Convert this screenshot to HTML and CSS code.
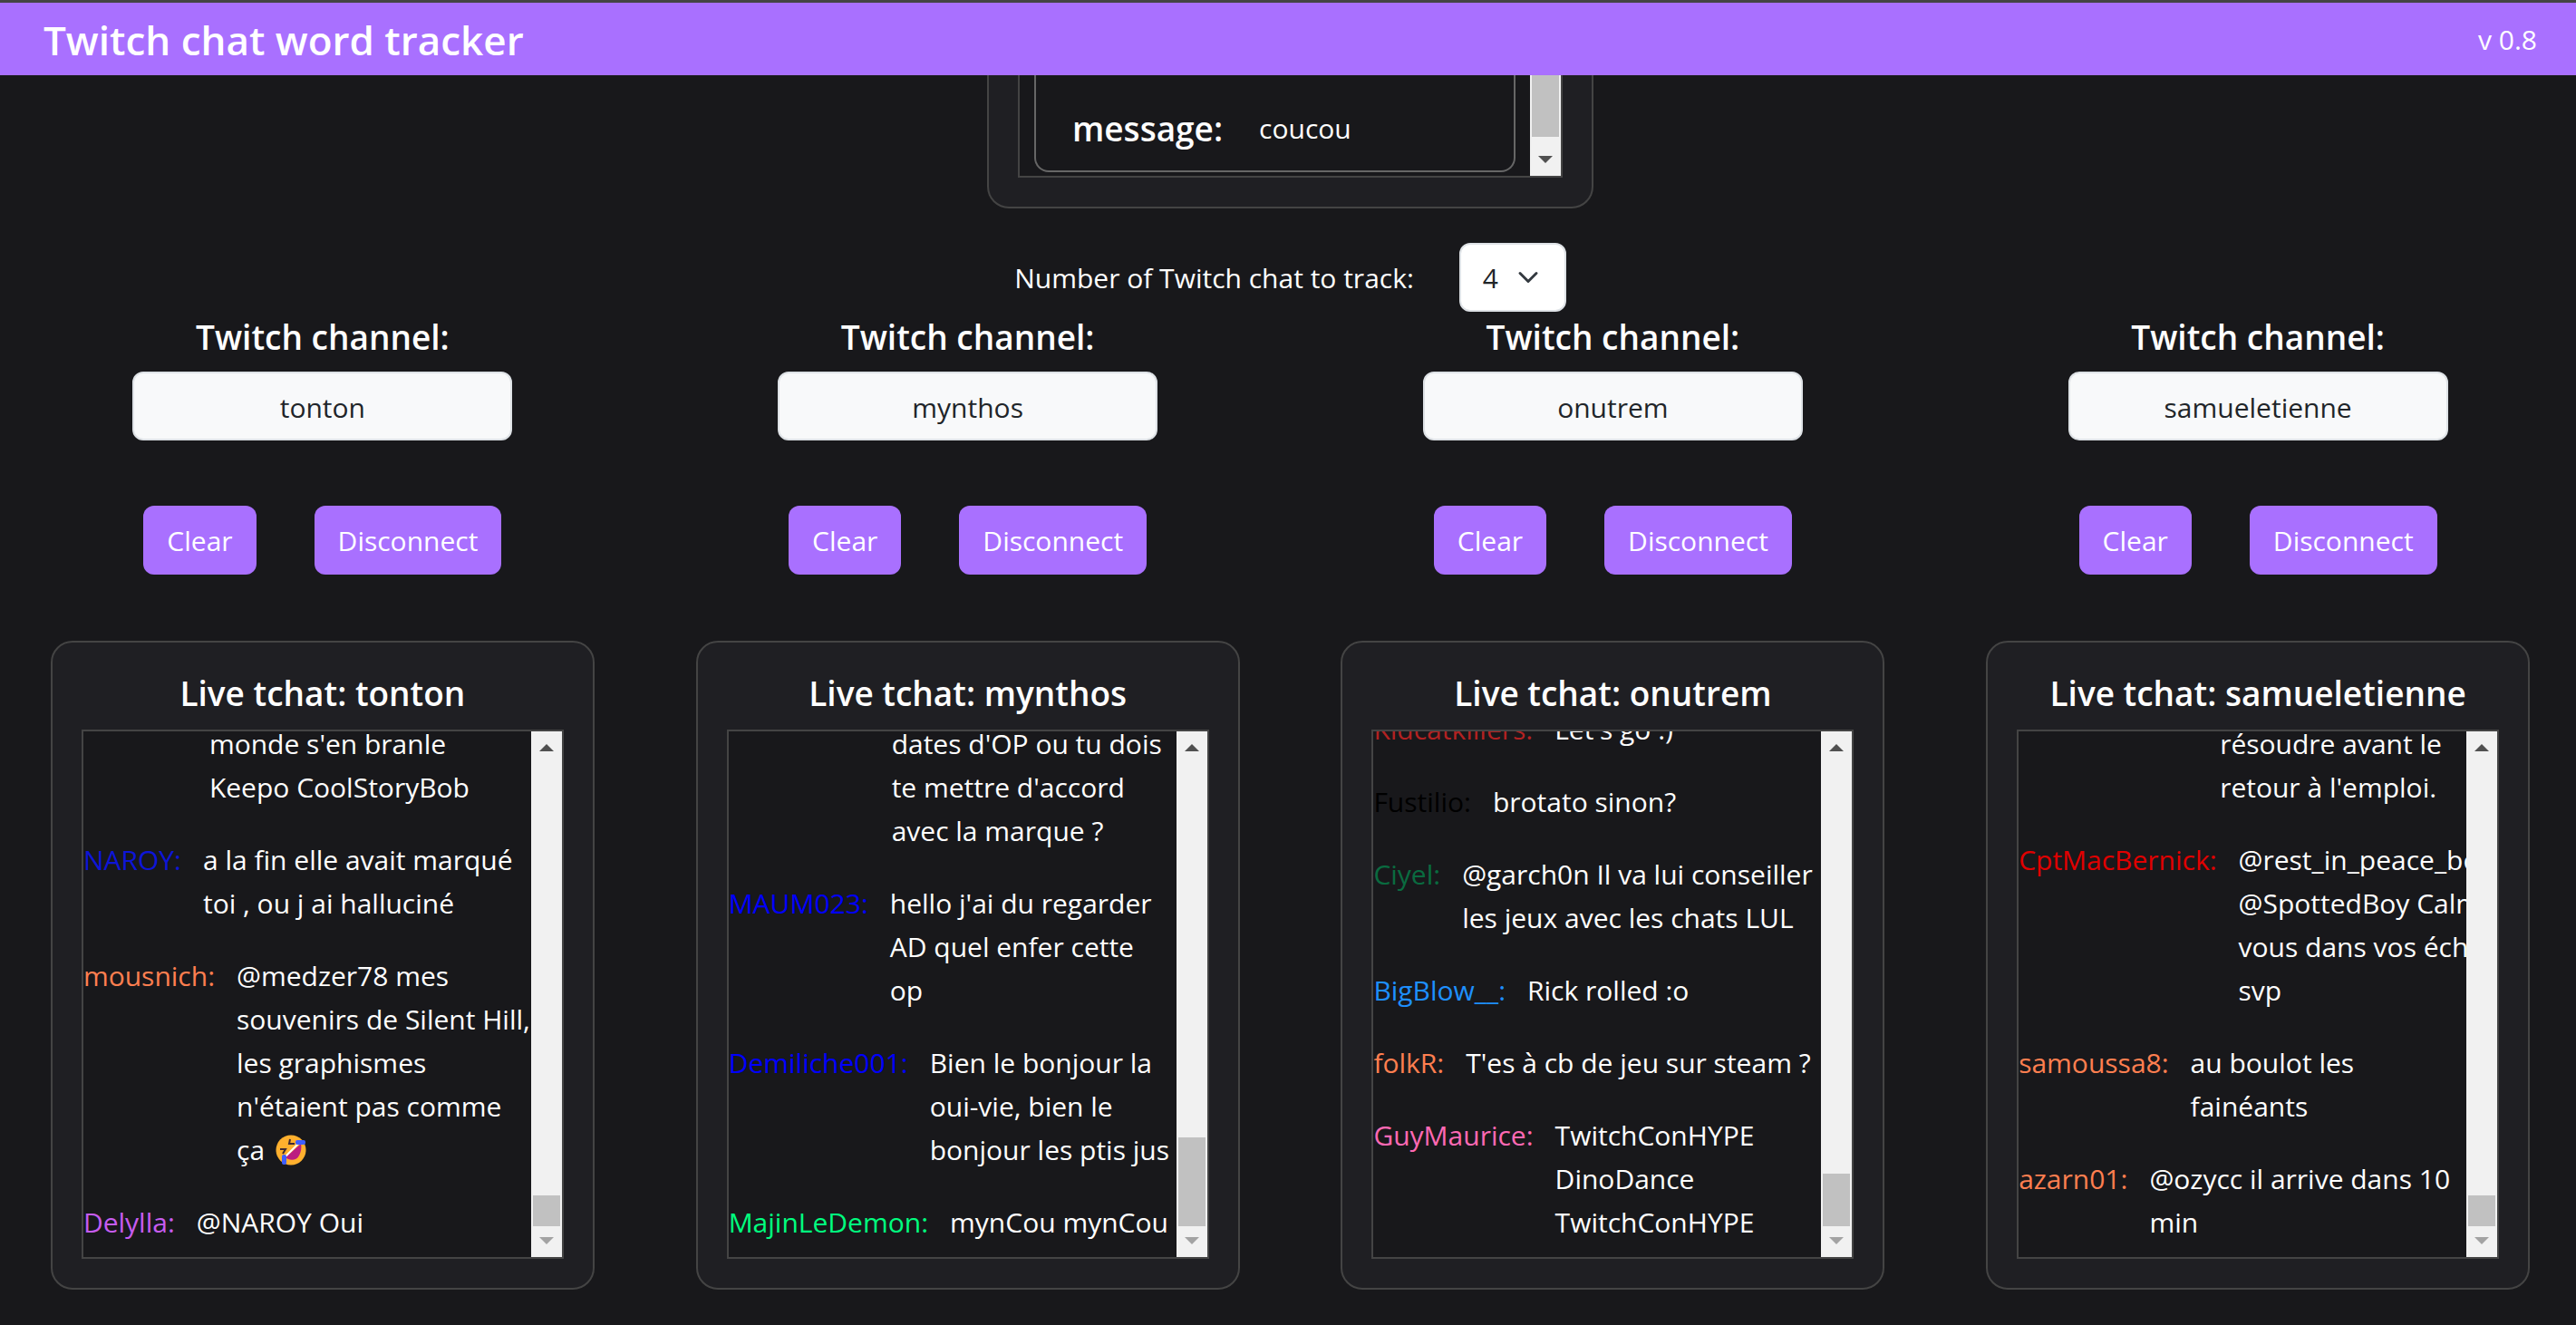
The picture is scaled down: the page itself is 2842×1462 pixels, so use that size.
FILE: index.html
```html
<!DOCTYPE html>
<html lang="en">
<head>
<meta charset="utf-8">
<title>Twitch chat word tracker</title>
<link rel="stylesheet" href="styles.css">
</head>
<body>
<header class="topbar">
  <h1 class="topbar-title">Twitch chat word tracker</h1>
  <span class="topbar-version">v 0.8</span>
</header>
<main class="page">
  <section class="card tracked">
    <div class="scrollbox tracked-box">
      <div class="tracked-list">
        <div class="tracked-item"><h2 class="heading">message:</h2><span>coucou</span></div>
      </div>
      <div class="scrollbar" aria-hidden="true">
        <div class="track"><div class="thumb" style="height: 68px"></div></div>
        <svg class="arrow" viewBox="0 0 34 34"><path d="M9 12h16l-8 8z"/></svg>
      </div>
    </div>
  </section>

  <div class="count">
    <label for="count">Number of Twitch chat to track:</label>
    <div class="select-wrap">
      <select id="count" class="select"><option>1</option><option>2</option><option>3</option><option selected>4</option></select>
      <svg class="chevron" viewBox="0 0 16 16"><path d="m2 5 6 6 6-6"/></svg>
    </div>
  </div>

  <div class="channels">
    <section class="channel">
      <label class="heading" for="ch1">Twitch channel:</label>
      <input class="field" id="ch1" type="text" value="tonton">
      <div class="actions"><button class="btn">Clear</button><button class="btn">Disconnect</button></div>
      <div class="card chat">
        <h2 class="heading">Live tchat: tonton</h2>
        <div class="scrollbox">
          <div class="messages">
            <p class="msg"><span class="indent-s"></span><span>monde s'en branle<br>Keepo CoolStoryBob</span></p>
            <p class="msg"><span class="navy">NAROY:</span><span>a la fin elle avait marqué<br>toi , ou j ai halluciné</span></p>
            <p class="msg"><span class="coral">mousnich:</span><span>@medzer78 mes<br>souvenirs de Silent Hill,<br>les graphismes<br>n'étaient pas comme<br>ça <svg class="emoji" viewBox="0 0 34 34" role="img" aria-label="rolling on the floor laughing"><circle cx="17" cy="17" r="16.500" fill="#ffb02e"/><path d="M28 10 11 25c4 4 12 4 15-2 2-4 3-8 2-13z" fill="#bb1d80"/><path d="M26 9 11 24" stroke="#fff" stroke-width="2"/><path d="m5 16 6 0-3 5M16 5l-1 5 6 0" fill="none" stroke="#402a32" stroke-width="2"/><rect x="22" y="6" width="11" height="5" rx="2" fill="#3f5fff"/><rect x="7" y="22" width="5" height="11" rx="2" fill="#3f5fff"/></svg></span></p>
            <p class="msg"><span class="orchid">Delylla:</span><span>@NAROY Oui</span></p>
          </div>
          <div class="scrollbar" aria-hidden="true">
            <svg class="arrow" viewBox="0 0 34 34"><path d="M9 22h16l-8-8z"/></svg>
            <div class="track track-end"><div class="thumb" style="height: 34px"></div></div>
            <svg class="arrow off" viewBox="0 0 34 34"><path d="M9 12h16l-8 8z"/></svg>
          </div>
        </div>
      </div>
    </section>

    <section class="channel">
      <label class="heading" for="ch2">Twitch channel:</label>
      <input class="field" id="ch2" type="text" value="mynthos">
      <div class="actions"><button class="btn">Clear</button><button class="btn">Disconnect</button></div>
      <div class="card chat">
        <h2 class="heading">Live tchat: mynthos</h2>
        <div class="scrollbox">
          <div class="messages">
            <p class="msg"><span class="indent-m"></span><span>dates d'OP ou tu dois<br>te mettre d'accord<br>avec la marque ?</span></p>
            <p class="msg"><span class="blue">MAUM023:</span><span>hello j'ai du regarder<br>AD quel enfer cette<br>op</span></p>
            <p class="msg"><span class="blue">Demiliche001:</span><span>Bien le bonjour la<br>oui-vie, bien le<br>bonjour les ptis jus</span></p>
            <p class="msg"><span class="green">MajinLeDemon:</span><span>mynCou mynCou</span></p>
          </div>
          <div class="scrollbar" aria-hidden="true">
            <svg class="arrow" viewBox="0 0 34 34"><path d="M9 22h16l-8-8z"/></svg>
            <div class="track track-end"><div class="thumb" style="height: 98px"></div></div>
            <svg class="arrow off" viewBox="0 0 34 34"><path d="M9 12h16l-8 8z"/></svg>
          </div>
        </div>
      </div>
    </section>

    <section class="channel">
      <label class="heading" for="ch3">Twitch channel:</label>
      <input class="field" id="ch3" type="text" value="onutrem">
      <div class="actions"><button class="btn">Clear</button><button class="btn">Disconnect</button></div>
      <div class="card chat">
        <h2 class="heading">Live tchat: onutrem</h2>
        <div class="scrollbox">
          <div class="messages">
            <p class="msg"><span class="brick">Kidcatkillers:</span><span>Let's go :)</span></p>
            <p class="msg"><span class="black">Fustilio:</span><span>brotato sinon?</span></p>
            <p class="msg"><span class="forest">Ciyel:</span><span>@garch0n Il va lui conseiller<br>les jeux avec les chats LUL</span></p>
            <p class="msg"><span class="sky">BigBlow__:</span><span>Rick rolled :o</span></p>
            <p class="msg"><span class="coral">folkR:</span><span>T'es à cb de jeu sur steam ?</span></p>
            <p class="msg"><span class="pink">GuyMaurice:</span><span>TwitchConHYPE<br>DinoDance<br>TwitchConHYPE</span></p>
          </div>
          <div class="scrollbar" aria-hidden="true">
            <svg class="arrow" viewBox="0 0 34 34"><path d="M9 22h16l-8-8z"/></svg>
            <div class="track track-end"><div class="thumb" style="height: 58px"></div></div>
            <svg class="arrow off" viewBox="0 0 34 34"><path d="M9 12h16l-8 8z"/></svg>
          </div>
        </div>
      </div>
    </section>

    <section class="channel">
      <label class="heading" for="ch4">Twitch channel:</label>
      <input class="field" id="ch4" type="text" value="samueletienne">
      <div class="actions"><button class="btn">Clear</button><button class="btn">Disconnect</button></div>
      <div class="card chat">
        <h2 class="heading">Live tchat: samueletienne</h2>
        <div class="scrollbox">
          <div class="messages">
            <p class="msg"><span class="indent-l"></span><span>résoudre avant le<br>retour à l'emploi.</span></p>
            <p class="msg"><span class="red">CptMacBernick:</span><span>@rest_in_peace_bob<br>@SpottedBoy Calmez<br>vous dans vos échanges<br>svp</span></p>
            <p class="msg"><span class="coral">samoussa8:</span><span>au boulot les<br>fainéants</span></p>
            <p class="msg"><span class="coral">azarn01:</span><span>@ozycc il arrive dans 10<br>min</span></p>
          </div>
          <div class="scrollbar" aria-hidden="true">
            <svg class="arrow" viewBox="0 0 34 34"><path d="M9 22h16l-8-8z"/></svg>
            <div class="track track-end"><div class="thumb" style="height: 34px"></div></div>
            <svg class="arrow off" viewBox="0 0 34 34"><path d="M9 12h16l-8 8z"/></svg>
          </div>
        </div>
      </div>
    </section>
  </div>
</main>
</body>
</html>
```
FILE: styles.css
```css
* { box-sizing: border-box; }

html { overflow: hidden; background: #18181b; }

body {
  margin: 0 -5px 0 0;
  color: #fff;
  font: 30px/48px "Open Sans", "Noto Sans", sans-serif;
}

h1, h2, p { margin: 0; }

.topbar {
  display: flex;
  align-items: center;
  justify-content: space-between;
  height: 83px;
  padding: 2px 48px 0;
  border-top: 3px solid #444;
  background: #a970ff;
}

.topbar-title { font-size: 44px; font-weight: 600; }

.heading {
  font-size: 37px;
  font-weight: 600;
  line-height: 48px;
  white-space: nowrap;
}

.card {
  padding: 32px;
  border: 2px solid #444;
  border-radius: 24px;
  background: #1f1f23;
}

.scrollbox {
  display: flex;
  border: 2px solid #444;
  background: #18181b;
}

/* Card of tracked messages, scrolled up under the top bar */
.tracked {
  width: 669px;
  margin: 0 auto;
  padding-top: 0;
  border-top: 0;
  border-radius: 0 0 24px 24px;
}

.tracked-box { height: 113px; border-top: 0; }

.tracked-list { flex: 1; padding: 0 16px 4px; }

.tracked-item {
  display: flex;
  align-items: center;
  gap: 40px;
  height: 107px;
  padding: 12px 40px 0;
  border: 2px solid #666;
  border-top: 0;
  border-radius: 0 0 16px 16px;
}

.scrollbar {
  display: flex;
  flex: 0 0 34px;
  flex-direction: column;
  background: #f1f1f1;
}

.track { display: flex; flex: 1; flex-direction: column; padding: 0 2px; }
.track-end { justify-content: flex-end; }
.thumb { background: #c1c1c1; }
.arrow { display: block; width: 34px; height: 34px; fill: #505050; }
.arrow.off { fill: #a3a3a3; }

.count {
  display: flex;
  align-items: center;
  justify-content: center;
  gap: 50px;
  margin-top: 38px;
}

.count label { padding-top: 2px; }

.select-wrap { position: relative; }

.select {
  display: block;
  width: 118px;
  height: 76px;
  padding: 2px 24px 0;
  border: 2px solid #dee2e6;
  border-radius: 12px;
  background: #fff;
  color: #212529;
  font: inherit;
  appearance: none;
}

.chevron {
  position: absolute;
  top: 26px;
  right: 30px;
  width: 24px;
  height: 24px;
  fill: none;
  stroke: #343a40;
  stroke-width: 2;
  stroke-linecap: round;
  stroke-linejoin: round;
  pointer-events: none;
}

.channels { display: grid; grid-template-columns: repeat(4, 1fr); margin-top: 4px; }

.channel { display: flex; flex-direction: column; align-items: center; }

.field {
  width: 419px;
  height: 76px;
  margin-top: 14px;
  padding: 2px 24px 0;
  border: 2px solid #dee2e6;
  border-radius: 12px;
  background: #f8f9fa;
  color: #212529;
  font: inherit;
  text-align: center;
}

.actions { display: flex; gap: 64px; margin: 72px 0 73px; }

.btn {
  height: 76px;
  padding: 2px 26px 0;
  border: 0;
  border-radius: 12px;
  background: #a970ff;
  color: #fff;
  font: inherit;
}

.chat { width: 600px; text-align: center; }
.chat .scrollbox { height: 584px; margin-top: 16px; }

.messages {
  display: flex;
  flex: 1;
  flex-direction: column;
  justify-content: flex-end;
  gap: 32px;
  min-width: 0;
  padding-bottom: 14px;
  overflow: hidden;
  text-align: left;
}

.msg { display: flex; flex: none; gap: 24px; white-space: nowrap; }

/* Space left by a sender's name that is scrolled out of view */
.indent-s { width: 115px; }
.indent-m { width: 156px; }
.indent-l { width: 198px; }

.emoji { width: 34px; height: 34px; margin-left: 4px; vertical-align: -6px; }

.navy { color: #0d15d8; }
.coral { color: #ff7f50; }
.orchid { color: #c65cf0; }
.blue { color: #00f; }
.green { color: #00ff7f; }
.brick { color: #b22222; }
.black { color: #000; }
.forest { color: #0a6b40; }
.sky { color: #1e90ff; }
.pink { color: #ff69b4; }
.red { color: #e00000; }
```
